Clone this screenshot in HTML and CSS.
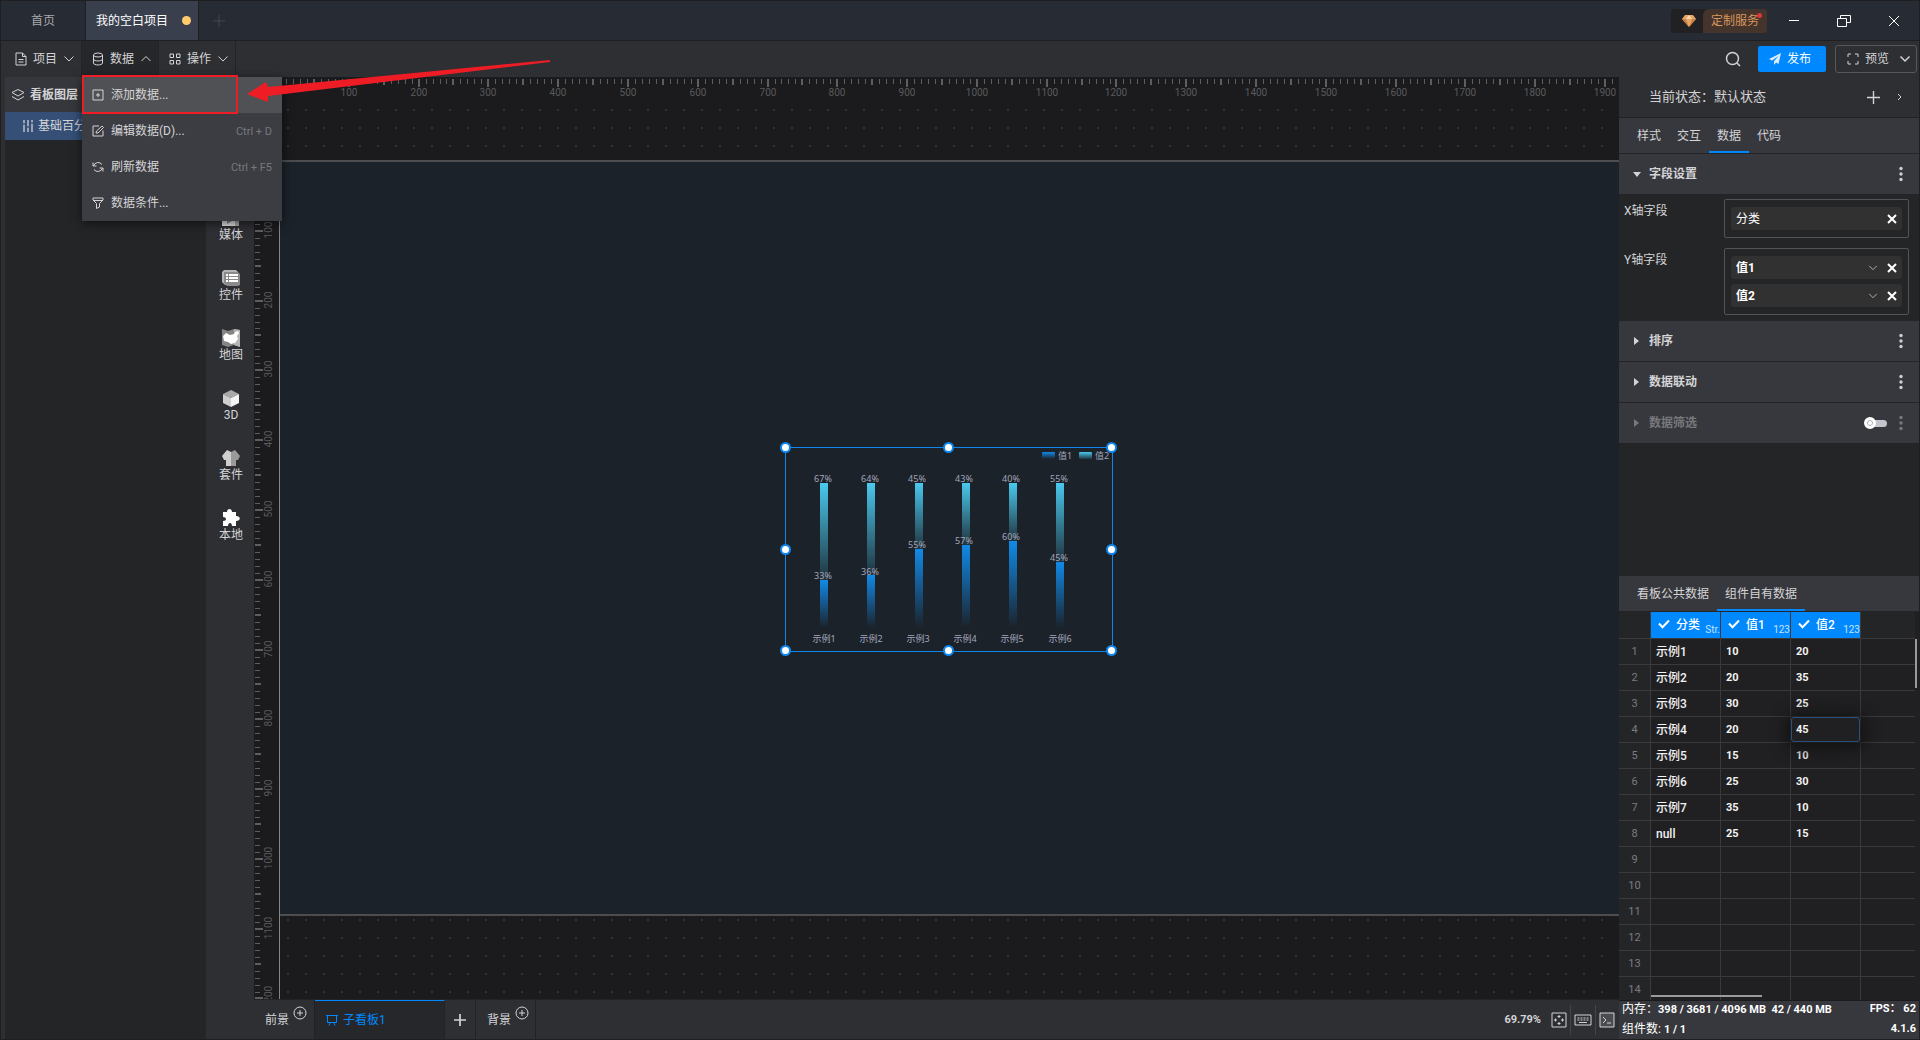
FILE: index.html
```html
<!DOCTYPE html>
<html lang="zh-CN">
<head>
<meta charset="utf-8">
<title>我的空白项目</title>
<link rel="stylesheet" href="styles.css">
</head>
<body>
<svg class="defs" width="0" height="0" aria-hidden="true">
  <symbol id="chev-down" viewBox="0 0 12 12"><path d="M1.5 3.5 6 8l4.500-4.500"/></symbol>
  <symbol id="chev-up" viewBox="0 0 12 12"><path d="M1.500 8 6 3.500 10.500 8"/></symbol>
  <symbol id="cross" viewBox="0 0 12 12"><path d="M2 2l8 8M10 2l-8 8"/></symbol>
  <symbol id="plus" viewBox="0 0 14 14"><path d="M7 0v14M0 7h14"/></symbol>
  <symbol id="add-circle" viewBox="0 0 14 14"><circle cx="7" cy="7" r="6"/><path d="M7 4v6M4 7h6"/></symbol>
  <symbol id="dots" viewBox="0 0 4 16"><circle cx="2" cy="2.500" r="1.700"/><circle cx="2" cy="8" r="1.700"/><circle cx="2" cy="13.500" r="1.700"/></symbol>
  <symbol id="check" viewBox="0 0 12 12"><path d="M1 5.500l3.500 3.800L11 2.500"/></symbol>
</svg>

<div class="app">
  <header class="titlebar">
    <nav class="doc-tabs">
      <button class="doc-tab">首页</button>
      <button class="doc-tab active">我的空白项目<span class="unsaved"></span></button>
      <button class="doc-add" aria-label="新建"><svg class="line" width="12" height="12"><use href="#plus"/></svg></button>
    </nav>
    <div class="win">
      <button class="custom">
        <span class="gem"><svg width="16" height="14" viewBox="0 0 16 14"><path fill="#e9a767" d="M4 1h8l3 4-7 8-7-8z"/><path fill="#ffd9a8" d="M5 5h6L8 1z"/><path fill="#c77f45" d="M1 5h4l3 8zM15 5h-4l-3 8z"/></svg></span>
        <span class="custom-text">定制服务</span><i class="badge"></i>
      </button>
      <button class="win-btn" aria-label="最小化"><svg class="line" width="14" height="14"><path d="M2 6.500h10"/></svg></button>
      <button class="win-btn" aria-label="还原"><svg class="line" width="16" height="14"><path d="M1.500 4.500h9v8h-9zM4.500 4V1.500h10v7H11"/></svg></button>
      <button class="win-btn" aria-label="关闭"><svg class="line" width="12" height="12"><path d="M1 1l10 10M11 1L1 11"/></svg></button>
    </div>
  </header>

  <div class="toolbar">
    <nav class="menus">
      <button class="menu-btn"><svg class="line" width="12" height="14" viewBox="0 0 12 14"><path d="M1 1h6.500L11 4.500V13H1zM7.500 1v3.500H11M3.500 7.500h5M3.500 10h5"/></svg>项目<svg class="line chev" width="12" height="12"><use href="#chev-down"/></svg></button>
      <button class="menu-btn open"><svg class="line" width="12" height="14" viewBox="0 0 12 14"><ellipse cx="6" cy="3" rx="4.500" ry="2"/><path d="M1.500 3v8c0 2.600 9 2.600 9 0V3M1.500 7c0 2.600 9 2.600 9 0"/></svg>数据<svg class="line chev" width="12" height="12"><use href="#chev-up"/></svg></button>
      <button class="menu-btn"><svg class="line" width="12" height="12" viewBox="0 0 12 12"><path d="M1 1h3.500v3.500H1zM7.500 1H11v3.500H7.500zM1 7.500h3.500V11H1zM7.500 7.500H11V11H7.500z"/></svg>操作<svg class="line chev" width="12" height="12"><use href="#chev-down"/></svg></button>
    </nav>
    <div class="actions">
      <button class="search" aria-label="搜索"><svg class="line thick" width="16" height="16"><circle cx="7.500" cy="7.500" r="6"/><path d="M12 12l3 3"/></svg></button>
      <button class="publish"><svg width="12" height="12" viewBox="0 0 12 12"><path fill="#d9ecff" d="M12 0 0 6l3 1.500L9.500 3 5 8.300V12l2-2.400L9.500 11z"/></svg>发布</button>
      <button class="preview"><svg class="line" width="12" height="12"><path d="M1 4V1h3M8 1h3v3M11 8v3H8M4 11H1V8"/></svg>预览<svg class="line thick end" width="12" height="12"><use href="#chev-down"/></svg></button>
    </div>
  </div>

  <main class="work">
    <aside class="layers">
      <h2><svg class="line" width="14" height="14" viewBox="0 0 14 14"><path d="M7 1.500l6 3-6 3.500-6-3.500zM1 8.500l6 3.500 6-3.500"/></svg>看板图层</h2>
      <button class="layer"><svg class="line" width="12" height="12" viewBox="0 0 12 12"><path stroke-width="2" d="M2 0v12M6 0v12M10 0v12"/><path class="notch" d="M1 4h2M5 7h2M9 3h2"/></svg>基础百分比</button>
    </aside>

    <nav class="kinds">
      <button class="kind"><svg width="18" height="18" viewBox="0 0 18 18"><path fill="#e2e2e2" d="M0 3h13v14H0z"/><path fill="#a9a9a9" d="M13 9l4-2v10h-4z"/><path fill="#888" d="M5 9l5 3-5 3z"/></svg>媒体</button>
      <button class="kind"><svg width="18" height="18" viewBox="0 0 18 18"><path fill="#b5b5b5" d="M2 1h12l2 2v12l-1 1H3l-3-3V3z"/><path fill="#8a8a8a" d="M2 3h14l2 2v11l-2 1H5l-3-3z"/><path stroke="#fff" stroke-width="2" d="M4 6h2M7 6h9M4 9h2M7 9h9M4 12h2M7 12h9"/></svg>控件</button>
      <button class="kind"><svg width="18" height="18" viewBox="0 0 18 18"><path fill="#858585" d="M0 0l6 2 6-2 6 1v17l-6-2-6 2-6-2z"/><path fill="#b5b5b5" d="M12 0l6 1v17l-6-2z"/><path fill="#fff" d="M1 7l3-3 4 2 4-1 1-2 3-1 1 2-2 3 1 3-3 4-4 1-3-2-4-1z"/></svg>地图</button>
      <button class="kind"><svg width="18" height="18" viewBox="0 0 18 18"><path fill="#a9a9a9" d="M9 1l8 4-8 4-8-4z"/><path fill="#cfcfcf" d="M1 5l8 4v9l-8-4z"/><path fill="#f4f4f4" d="M17 5L9 9v9l8-4z"/></svg>3D</button>
      <button class="kind"><svg width="18" height="18" viewBox="0 0 18 18"><path fill="#cfcfcf" d="M5 1l4 2v14H4v-6H2L0 7z"/><path fill="#9a9a9a" d="M13 1L9 3v14h5v-6h2l2-4z"/></svg>套件</button>
      <button class="kind"><svg width="18" height="18" viewBox="0 0 18 18"><path fill="#fff" d="M1 3h4c0-4 5-4 5 0h4v4c5 0 5 5 0 5v5h-4c0-4-4-4-4 0H1v-5c4 0 4-4 0-4z"/></svg>本地</button>
    </nav>

    <section class="center">
      <div class="stage">
        <div class="ruler ruler-x" data-axis="x"></div>
        <div class="ruler ruler-y" data-axis="y"></div>
        <div class="space">
          <div class="board">
            <div class="widget">
              <svg class="chart" width="326" height="203" viewBox="0 0 326 203">
                <defs>
                  <linearGradient id="g1" x1="0" y1="0" x2="0" y2="1"><stop offset="0" stop-color="#118ae8"/><stop offset="1" stop-color="#118ae8" stop-opacity="0"/></linearGradient>
                  <linearGradient id="g2" x1="0" y1="0" x2="0" y2="1"><stop offset="0" stop-color="#4ac9ee"/><stop offset="1" stop-color="#4ac9ee" stop-opacity="0.100"/></linearGradient>
                </defs>
                <rect x="256" y="4" width="13" height="7" rx="1" fill="url(#g1)"/><text x="272" y="11">值1</text>
                <rect x="293" y="4" width="13" height="7" rx="1" fill="url(#g2)"/><text x="309" y="11">值2</text>
                <g fill="url(#g2)"><rect x="34" y="35" width="8" height="97"/><rect x="81" y="35" width="8" height="92"/><rect x="129" y="35" width="8" height="66"/><rect x="176" y="35" width="8" height="62"/><rect x="223" y="35" width="8" height="58"/><rect x="270" y="35" width="8" height="79"/></g>
                <g fill="url(#g1)"><rect x="34" y="132" width="8" height="48"/><rect x="81" y="127" width="8" height="53"/><rect x="129" y="101" width="8" height="79"/><rect x="176" y="97" width="8" height="83"/><rect x="223" y="93" width="8" height="87"/><rect x="270" y="114" width="8" height="66"/></g>
                <g class="mid"><text x="37" y="34">67%</text><text x="84" y="34">64%</text><text x="131" y="34">45%</text><text x="178" y="34">43%</text><text x="225" y="34">40%</text><text x="273" y="34">55%</text>
                <text x="37" y="131">33%</text><text x="84" y="127">36%</text><text x="131" y="100">55%</text><text x="178" y="96">57%</text><text x="225" y="92">60%</text><text x="273" y="113">45%</text></g>
                <g class="mid"><text x="38" y="194">示例1</text><text x="85" y="194">示例2</text><text x="132" y="194">示例3</text><text x="179" y="194">示例4</text><text x="226" y="194">示例5</text><text x="274" y="194">示例6</text></g>
              </svg>
              <i class="grip t l"></i><i class="grip t c"></i><i class="grip t r"></i><i class="grip m l"></i><i class="grip m r"></i><i class="grip b l"></i><i class="grip b c"></i><i class="grip b r"></i>
            </div>
          </div>
        </div>
      </div>
      <footer class="boards">
        <button class="btab fore">前景<svg class="line ring" width="14" height="14"><use href="#add-circle"/></svg></button>
        <button class="btab current"><svg class="line" width="12" height="12" viewBox="0 0 12 12"><path d="M0 1.500h12M1.500 2v6.500h9V2M4 9l-1 2.500M8 9l1 2.500"/></svg>子看板1</button>
        <button class="btab plus" aria-label="添加"><svg class="line bold" width="12" height="12"><use href="#plus"/></svg></button>
        <button class="btab fore">背景<svg class="line ring" width="14" height="14"><use href="#add-circle"/></svg></button>
        <div class="tools">
          <span class="zoom">69.79%</span>
          <button aria-label="适应窗口"><svg class="line" width="16" height="16"><path d="M1 1h14v14H1zM8 3v3M8 10v3M3 8h3M10 8h3M6.500 4.500h3M6.500 11.500h3M4.500 6.500v3M11.500 6.500v3"/></svg></button>
          <button aria-label="键盘"><svg class="line" width="18" height="12"><path d="M1 1h16v10H1zM3.500 4h2M6.500 4h2M9.500 4h2M12.500 4h2M3.500 6h2M6.500 6h2M9.500 6h2M12.500 6h2M5 8.500h8"/></svg></button>
          <button aria-label="控制台"><svg class="line" width="16" height="16"><path fill="#4b4c50" d="M1 1h14v14H1z"/><path d="M4 5l3 3-3 3M8 11h4"/></svg></button>
        </div>
      </footer>
    </section>

    <aside class="side">
      <div class="state"><span>当前状态：</span><span>默认状态</span><button class="state-add" aria-label="添加状态"><svg class="line thick" width="13" height="13" viewBox="0 0 14 14"><use href="#plus"/></svg></button><button aria-label="展开"><svg class="line" width="6" height="8"><path d="M1 1l3 3-3 3"/></svg></button></div>
      <nav class="tabs"><button>样式</button><button>交互</button><button class="on">数据</button><button>代码</button></nav>
      <button class="sect"><i class="tri down"></i>字段设置<svg width="4" height="16"><use href="#dots"/></svg></button>
      <div class="fields">
        <span class="name">X轴字段</span>
        <div class="box"><div class="chip">分类<button class="x" aria-label="移除"><svg class="line bold" width="12" height="12"><use href="#cross"/></svg></button></div></div>
        <span class="name">Y轴字段</span>
        <div class="box">
          <div class="chip num">值1<button class="v" aria-label="选项"><svg class="line" width="10" height="10"><use href="#chev-down"/></svg></button><button class="x" aria-label="移除"><svg class="line bold" width="12" height="12"><use href="#cross"/></svg></button></div>
          <div class="chip num">值2<button class="v" aria-label="选项"><svg class="line" width="10" height="10"><use href="#chev-down"/></svg></button><button class="x" aria-label="移除"><svg class="line bold" width="12" height="12"><use href="#cross"/></svg></button></div>
        </div>
      </div>
      <button class="sect"><i class="tri"></i>排序<svg width="4" height="16"><use href="#dots"/></svg></button>
      <button class="sect"><i class="tri"></i>数据联动<svg width="4" height="16"><use href="#dots"/></svg></button>
      <div class="sect off"><i class="tri"></i><label for="filter">数据筛选</label><input type="checkbox" class="switch" id="filter"><svg width="4" height="16"><use href="#dots"/></svg></div>
      <div class="spacer"></div>
      <nav class="tabs data-tabs"><button>看板公共数据</button><button class="on">组件自有数据</button></nav>
      <div class="grid">
        <table>
          <thead><tr><th class="idx"></th>
            <th><svg class="line bold" width="12" height="12"><use href="#check"/></svg>分类<small>Str.</small></th>
            <th><svg class="line bold" width="12" height="12"><use href="#check"/></svg>值1<small>123</small></th>
            <th><svg class="line bold" width="12" height="12"><use href="#check"/></svg>值2<small>123</small></th><th class="rest"></th></tr></thead>
          <tbody>
            <tr><td>1</td><td>示例1</td><td>10</td><td>20</td><td></td></tr>
            <tr><td>2</td><td>示例2</td><td>20</td><td>35</td><td></td></tr>
            <tr><td>3</td><td>示例3</td><td>30</td><td>25</td><td></td></tr>
            <tr><td>4</td><td>示例4</td><td>20</td><td class="edit"><input value="45" aria-label="值2"></td><td></td></tr>
            <tr><td>5</td><td>示例5</td><td>15</td><td>10</td><td></td></tr>
            <tr><td>6</td><td>示例6</td><td>25</td><td>30</td><td></td></tr>
            <tr><td>7</td><td>示例7</td><td>35</td><td>10</td><td></td></tr>
            <tr><td>8</td><td>null</td><td>25</td><td>15</td><td></td></tr>
            <tr><td>9</td><td></td><td></td><td></td><td></td></tr>
            <tr><td>10</td><td></td><td></td><td></td><td></td></tr>
            <tr><td>11</td><td></td><td></td><td></td><td></td></tr>
            <tr><td>12</td><td></td><td></td><td></td><td></td></tr>
            <tr><td>13</td><td></td><td></td><td></td><td></td></tr>
            <tr><td>14</td><td></td><td></td><td></td><td></td></tr>
          </tbody>
        </table>
        <i class="bar-y"></i><i class="bar-x"></i>
      </div>
      <div class="status">
        <div><span>内存：<b>398 / 3681 / 4096 MB&nbsp; 42 / 440 MB</b></span><b>FPS： 62</b></div>
        <div><span>组件数: <b>1 / 1</b></span><b>4.1.6</b></div>
      </div>
    </aside>
  </main>

  <div class="dropdown" role="menu">
    <button class="item hot" role="menuitem"><svg class="line" width="12" height="12"><path d="M1 1h10v10H1zM6 4v4M4 6h4"/></svg>添加数据...</button>
    <button class="item" role="menuitem"><svg class="line" width="12" height="12"><path d="M7 1H1v10h10V5.500M4 8l.500-2L10 1l1.500 1.500L6 8z"/></svg>编辑数据(D)...<kbd>Ctrl + D</kbd></button>
    <button class="item" role="menuitem"><svg class="line" width="12" height="12"><path d="M1.500 5A4.800 4.800 0 0 1 10 3.500M10.500 7A4.800 4.800 0 0 1 2 8.500M1 1.500V5h3.500M11 10.500V7H7.500"/></svg>刷新数据<kbd>Ctrl + F5</kbd></button>
    <button class="item" role="menuitem"><svg class="line" width="12" height="12"><path d="M1 1h10v2L7.500 6.500V10l-3 1.500v-5L1 3zM1.500 3.500h9"/></svg>数据条件...</button>
  </div>
  <div class="frame"></div>
  <svg class="arrow" width="310" height="48" viewBox="0 0 310 48"><path fill="#ee1c25" d="M3 36 22 24l2 5L306 2v2L24 38v6z"/></svg>
</div>
<script src="rulers.js"></script>
</body>
</html>
```
FILE: rulers.js
```js
// Draws the ticks and numbers of both rulers at the current zoom.
const ZOOM = 0.6979;
const NS = 'http://www.w3.org/2000/svg';

document.querySelectorAll('.ruler').forEach((ruler) => {
  const horizontal = ruler.dataset.axis === 'x';
  const length = horizontal ? ruler.clientWidth : ruler.clientHeight;
  const origin = horizontal ? 0 : 85;
  const svg = document.createElementNS(NS, 'svg');
  svg.setAttribute('width', '100%');
  svg.setAttribute('height', '100%');
  for (let value = 0; origin + value * ZOOM <= length + 4; value += 10) {
    const at = Math.round(origin + value * ZOOM);
    const size = value % 100 === 0 ? 8 : value % 50 === 0 ? 6 : 5;
    const thick = value % 50 === 0 ? 2 : 1;
    const tick = document.createElementNS(NS, 'rect');
    tick.setAttribute('x', horizontal ? at - thick + 1 : 1);
    tick.setAttribute('y', horizontal ? 2 : at - thick);
    tick.setAttribute('width', horizontal ? thick : size);
    tick.setAttribute('height', horizontal ? size : thick);
    svg.append(tick);
    if (value && value % 100 === 0) {
      const label = document.createElement('span');
      label.textContent = value;
      label.style[horizontal ? 'left' : 'top'] = at + 'px';
      ruler.append(label);
    }
  }
  ruler.prepend(svg);
});
```
FILE: styles.css
```css
*, ::before { box-sizing: border-box; }

body {
  margin: 0;
  color: #d4d4d6;
  font: 12px/16px Roboto, "Noto Sans CJK SC", sans-serif;
}

button {
  display: flex;
  align-items: center;
  margin: 0;
  padding: 0;
  border: 0;
  background: none;
  color: inherit;
  font: inherit;
  white-space: nowrap;
}

svg { flex: none; display: block; }
.defs { position: absolute; }
.line { fill: none; stroke: currentColor; stroke-width: 1; }
.thick { stroke-width: 1.5; }
.bold { stroke-width: 2; }

.app {
  position: relative;
  display: flex;
  flex-direction: column;
  height: 100vh;
  padding: 1px;
  overflow: hidden;
  background: #1f1f21;
}

/* Title bar */
.titlebar {
  display: flex;
  justify-content: space-between;
  height: 39px;
  background: #272b34;
}
.doc-tabs { display: flex; }
.doc-tab {
  justify-content: center;
  width: 85px;
  border-right: 1px solid #1f1f21;
  color: #a8a9ac;
}
.doc-tab.active { justify-content: flex-start; width: 113px; padding-left: 10px; gap: 14px; background: #3a3f4d; color: #fff; }
.unsaved { width: 9px; height: 9px; border-radius: 50%; background: #ffcb6b; }
.doc-add { padding-left: 14px; color: #484b53; }

.win { display: flex; align-items: center; color: #fff; }
.custom {
  position: relative;
  height: 24px;
  margin-right: 2px;
  border-radius: 3px;
  background: #212123;
  color: #d8975d;
}
.gem { display: flex; justify-content: center; width: 32px; padding-left: 4px; }
.custom-text { width: 64px; padding: 4px 8px; border-radius: 6px 3px 3px 0; background: #44342c; }
.badge { position: absolute; top: 4px; right: 5px; width: 5px; height: 5px; border-radius: 50%; background: #e0343c; }
.win-btn { justify-content: center; width: 50px; height: 38px; }

/* Toolbar */
.toolbar {
  display: flex;
  justify-content: space-between;
  height: 36px;
  margin-top: 1px;
  background: #2e2f33;
}
.menus { display: flex; }
.menu-btn { width: 77px; padding-left: 10px; gap: 6px; border-right: 1px solid #242427; }
.menu-btn:first-child { width: 81px; padding-left: 14px; }
.menu-btn.open { background: #26272a; }
.actions { display: flex; align-items: center; padding-right: 2px; }
.search { margin-right: 17px; }
.publish { width: 68px; height: 26px; margin-right: 9px; padding-left: 11px; gap: 6px; border-radius: 2px; background: #0088ff; color: #fff; }
.preview { width: 82px; height: 28px; padding-left: 11px; gap: 6px; border: 1px solid #56575b; border-radius: 3px; }
.preview .end { margin-left: 4px; }

/* Work area */
.work {
  flex: 1;
  min-height: 0;
  display: grid;
  grid-template-columns: 201px 48px minmax(0, 1fr) 300px;
  grid-template-rows: minmax(0, 1fr);
  padding-left: 4px;
  background: #2e2f33;
}
.layers { background: #242527; }
.layers h2 { display: flex; align-items: center; gap: 5px; height: 35px; margin: 0; padding-left: 6px; background: #36373c; font-size: 12px; font-weight: 700; }
.layer { width: 100%; height: 28px; padding-left: 17px; gap: 4px; background: #354f76; }
.layer svg { color: #98a3b5; }
.notch { stroke: #55698a; stroke-width: 2; }

.kinds { padding: 132px 0 0 2px; background: #2e2f33; }
.kind { flex-direction: column; width: 100%; height: 60px; }

.center { display: flex; flex-direction: column; min-width: 0; }
.stage {
  flex: 1;
  min-height: 0;
  display: grid;
  grid-template-columns: 25px minmax(0, 1fr);
  grid-template-rows: 30px minmax(0, 1fr);
  background: #1b1b1d;
}
.ruler { position: relative; overflow: hidden; color: #5a5a5c; font-size: 10px; line-height: 12px; }
.ruler svg { fill: #5e5e60; }
.ruler span { position: absolute; }
.ruler-x { grid-column: 2; grid-row: 1; }
.ruler-x span { top: 10px; transform: translateX(-50%); }
.ruler-y { grid-column: 1; grid-row: 1 / 3; }
.ruler-y span { left: 9px; margin-top: -2px; writing-mode: vertical-rl; transform: translateY(-50%) rotate(180deg); }
.space {
  grid-column: 2;
  grid-row: 2;
  display: flex;
  padding: 53px 0 83px;
  border-left: 1px solid #858587;
  background: conic-gradient(from 90deg at 16px 16px, #333335 25%, transparent 0) 9px 4px / 18px 18px;
}
.board { position: relative; flex: 1; border-top: 2px solid #4c4d4f; border-bottom: 2px solid #4c4d4f; background: #1b222a; }

.widget { position: absolute; left: 505px; top: 285px; border: 1px solid #0f86ee; }
.chart text { fill: #a3a6bb; font: 9px "Noto Sans", "Noto Sans CJK SC", sans-serif; }
.mid { text-anchor: middle; }
.grip { position: absolute; width: 11px; height: 11px; margin: -6px; border: 2px solid #0f86ee; border-radius: 50%; background: #fff; }
.t { top: 0; }
.m { top: 50%; }
.b { top: 100%; }
.l { left: 0; }
.c { left: 50%; }
.r { left: 100%; }

/* Board tabs */
.boards { display: flex; height: 40px; border-top: 1px solid #232326; background: #2e2f33; }
.btab { border-right: 1px solid #222225; }
.fore { width: 60px; padding-left: 11px; gap: 4px; }
.fore:first-child { width: 61px; }
.ring { margin-bottom: 14px; }
.current { width: 130px; padding-left: 11px; gap: 5px; border-top: 1px solid #0088ff; background: #26272b; color: #0088ff; }
.plus { justify-content: center; width: 31px; }
.tools { display: flex; align-items: center; margin-left: auto; padding-right: 4px; }
.zoom { margin-right: 7px; font-size: 11px; font-weight: 700; }
.tools button { height: 30px; padding: 0 3px; border-right: 1px solid #444549; }
.tools button:last-child { border: 0; padding-right: 0; }

/* Inspector */
.side { display: flex; flex-direction: column; background: #242527; }
.state { display: flex; align-items: center; height: 41px; padding: 0 16px 0 30px; border-bottom: 1px solid #222225; background: #2e2f33; font-size: 13px; }
.state-add { margin: 0 17px 0 auto; }
.tabs { display: flex; height: 36px; padding-left: 10px; border-bottom: 1px solid #242427; background: #37383d; }
.tabs button { padding: 0 8px; border-top: 2px solid transparent; border-bottom: 2px solid transparent; }
.tabs .on { border-bottom-color: #0088ff; }
.sect { display: flex; align-items: center; width: 100%; height: 41px; padding: 0 16px 0 13px; gap: 8px; border-bottom: 1px solid #242427; background: #37383d; font-weight: 700; }
.sect > svg { margin-left: auto; fill: #cfcfd1; }
.tri { display: flex; justify-content: center; align-items: center; width: 9px; }
.tri::before { content: ""; border: solid transparent; border-width: 4px 0 4px 5px; border-left-color: #d4d4d6; }
.tri.down::before { border-width: 5px 4px 0; border-color: #d4d4d6 transparent transparent; }
.off { color: #77787c; }
.sect.off > svg { margin-left: 4px; fill: #77787c; }
.off .tri::before { border-left-color: #77787c; }
.switch { appearance: none; position: relative; width: 22px; height: 7px; margin: 0 0 0 auto; border-radius: 4px; background: #c3c5ce; }
.switch::before { content: ""; position: absolute; left: -1px; top: -3px; width: 12px; height: 12px; border: 3px solid #fff; border-radius: 50%; background: #fff; box-shadow: inset 0 0 0 1px #b0b2ba; }

.fields { display: grid; grid-template-columns: 100px minmax(0, 1fr); gap: 10px 0; padding: 4px 10px 6px 5px; }
.name { padding-top: 4px; }
.box { display: flex; flex-direction: column; gap: 5px; padding: 7px 6px; border: 1px solid #525356; border-radius: 2px; }
.chip { display: flex; align-items: center; height: 23px; padding: 0 4px 0 5px; border-radius: 3px; background: #313132; color: #fff; }
.num { font-weight: 700; }
.x { margin-left: auto; }
.v { margin-left: auto; color: #c8c8ca; }
.v + .x { margin-left: 8px; }
.spacer { flex: 1; }

/* Data table */
.grid { position: relative; height: 388px; overflow: hidden; }
table { width: 100%; table-layout: fixed; border-spacing: 0; padding-right: 4px; background: #202022; }
th, td { height: 26px; padding: 0 5px; border-right: 1px solid #3a3a3c; border-bottom: 1px solid #3a3a3c; white-space: nowrap; text-align: left; }
th { position: relative; width: 70px; height: 27px; padding-left: 7px; background: #0088ff; color: #fff; font-weight: 500; }
th svg { display: inline-block; margin-right: 6px; vertical-align: -1px; }
th small { position: absolute; right: 0; bottom: 0; color: #c5e3ff; font-size: 10px; font-weight: 400; }
th.idx { width: 32px; background: #242527; }
th.rest { width: auto; background: #242527; border-right: 0; }
td { color: #f2f2f3; font-weight: 500; }
td:nth-child(n+3) { font-size: 11px; font-weight: 700; }
td:first-child { padding: 0; background: #242527; color: #7b7c80; font-size: 11px; font-weight: 400; text-align: center; }
td:last-child { border-right: 0; }
td.edit { position: relative; padding: 0; }
.edit input { display: block; width: 100%; height: 25px; padding: 0 4px; border: 1px solid #295078; border-radius: 3px; background: #202022; box-shadow: 0 2px 16px 4px #111112; color: #f2f2f3; font: inherit; outline: 0; }
.bar-y { position: absolute; right: 2px; top: 27px; width: 2px; height: 49px; background: #9a9a9c; }
.bar-x { position: absolute; left: 32px; bottom: 3px; width: 111px; height: 2px; background: #9a9a9c; }

.status { display: flex; flex-direction: column; justify-content: space-between; height: 39px; padding: 0 3px 1px; border-top: 1px solid #1b1b1d; background: #37383d; color: #fff; }
.status div { display: flex; justify-content: space-between; }
.status b { font-size: 11px; }

/* Data menu */
.dropdown { position: absolute; left: 82px; top: 77px; width: 200px; background: #3c3d42; box-shadow: 0 2px 10px #0009; }
.item { width: 100%; height: 36px; padding: 0 10px; gap: 7px; }
.item.hot { background: #505154; }
.item kbd { margin-left: auto; color: #77787c; font: 11px Roboto, sans-serif; }
.frame { position: absolute; left: 82px; top: 75px; width: 156px; height: 39px; border: 2px solid #ee1c25; }
.arrow { position: absolute; left: 244px; top: 58px; }
```
